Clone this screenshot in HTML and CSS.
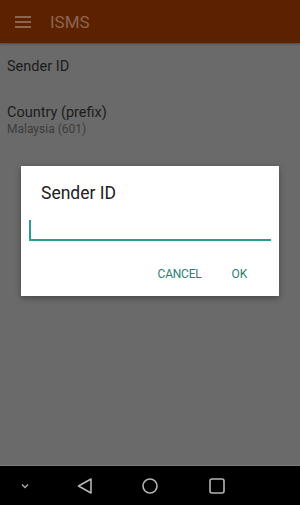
FILE: index.html
```html
<!DOCTYPE html>
<html>
<head>
<meta charset="utf-8">
<link rel="stylesheet" href="styles.css">
</head>
<body>
<div class="screen">
  <header class="appbar">
    <svg class="menu" width="16" height="12" viewBox="0 0 16 12"><rect x="0" y="0" width="16" height="2" fill="#8d6450"/><rect x="0" y="5" width="16" height="2" fill="#8d6450"/><rect x="0" y="10" width="16" height="2" fill="#8d6450"/></svg>
    <span class="title">ISMS</span>
  </header>
  <main class="content">
    <div class="pref single"><div class="pref-title">Sender ID</div></div>
    <div class="pref"><div class="pref-title">Country (prefix)</div><div class="pref-sub">Malaysia (601)</div></div>
  </main>
  <nav class="navbar">
    <svg width="10" height="6" viewBox="0 0 10 6" class="nav-chev"><path d="M2 1.5 L5 4.5 L8 1.5" stroke="#aaa" stroke-width="1.4" fill="none"/></svg>
    <svg width="18" height="18" viewBox="0 0 18 18"><path d="M15 2 L15 16 L2.5 9 Z" stroke="#b5b5b5" stroke-width="1.6" fill="none" stroke-linejoin="round"/></svg>
    <svg width="18" height="18" viewBox="0 0 18 18"><circle cx="9" cy="9" r="7" stroke="#b5b5b5" stroke-width="1.6" fill="none"/></svg>
    <svg width="18" height="18" viewBox="0 0 18 18"><rect x="2" y="2" width="14" height="14" rx="2" stroke="#b5b5b5" stroke-width="1.6" fill="none"/></svg>
  </nav>
  <div class="dialog">
    <div class="dialog-title">Sender ID</div>
    <div class="field"><span class="cursor"></span></div>
    <div class="actions">
      <span class="btn">CANCEL</span>
      <span class="btn">OK</span>
    </div>
  </div>
</div>
</body>
</html>
```
FILE: styles.css
```css
html, body {
  margin: 0;
  padding: 0;
}
body {
  font-family: Roboto, "Noto Sans", sans-serif;
  background: #6a6a6a;
}
.screen {
  position: relative;
  width: 300px;
  height: 505px;
  display: flex;
  flex-direction: column;
  overflow: hidden;
}
.appbar {
  height: 43px;
  background: #5c2200;
  display: flex;
  align-items: center;
  padding-left: 15px;
  box-sizing: border-box;
  box-shadow: 0 1px 2px rgba(0,0,0,0.35);
  position: relative;
  z-index: 1;
}
.menu {
  display: block;
}
.title {
  margin-left: 19px;
  font-size: 17px;
  color: #8d6450;
  font-weight: 400;
}
.content {
  flex: 1;
  background: #6a6a6a;
  display: flex;
  flex-direction: column;
}
.pref {
  padding: 0 7px;
  height: 44px;
  display: flex;
  flex-direction: column;
  justify-content: center;
}
.pref.single {
  height: 47px;
  padding-bottom: 8px;
}
.pref-title {
  font-size: 14.5px;
  color: #1c1c1c;
  line-height: 17px;
}
.pref-sub {
  font-size: 12px;
  color: #3c3c3c;
  line-height: 16px;
}
.navbar {
  height: 40px;
  background: #000;
  border-top: 1px solid #7c7c7c;
  display: flex;
  align-items: center;
  padding-left: 20px;
  box-sizing: border-box;
}
.navbar svg {
  display: block;
}
.nav-chev {
  margin-right: 46px;
}
.navbar svg:nth-child(2) {
  margin-right: 47px;
}
.navbar svg:nth-child(3) {
  margin-right: 49px;
}
.dialog {
  position: absolute;
  left: 21px;
  top: 166px;
  width: 258px;
  height: 130px;
  background: #fff;
  box-shadow: 0 2px 6px rgba(0,0,0,0.35);
  display: flex;
  flex-direction: column;
  box-sizing: border-box;
  padding: 17px 8px 0;
}
.dialog-title {
  font-size: 17.5px;
  color: #212121;
  line-height: 20px;
  padding-left: 12px;
}
.field {
  margin-top: 13px;
  height: 23px;
  border-bottom: 2px solid #2a9d8f;
  position: relative;
}
.cursor {
  position: absolute;
  left: 0;
  top: 4px;
  width: 2px;
  height: 19px;
  background: #2a9d8f;
}
.actions {
  display: flex;
  justify-content: flex-end;
  align-items: center;
  margin-top: 26px;
  gap: 30px;
  padding-right: 24px;
}
.btn {
  font-size: 12px;
  font-weight: 400;
  color: #2c7d72;
  letter-spacing: -0.2px;
}
```
